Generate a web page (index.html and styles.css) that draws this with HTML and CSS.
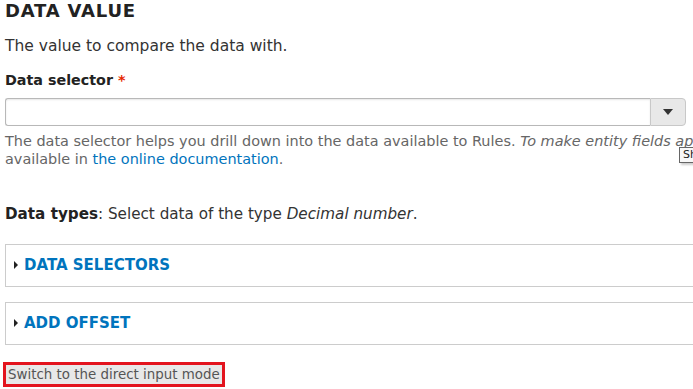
FILE: index.html
```html
<!DOCTYPE html>
<html lang="en">

<head>
    <meta charset="UTF-8" />
    <title>Data value</title>
    <link rel="stylesheet" href="styles.css">
</head>

<body>
    <div class="form-item">
        <h4 class="label-head">Data value</h4>
        <p class="intro">The value to compare the data with.</p>

        <label class="label" for="selector">Data selector <span class="req">*</span></label>
        <div class="combo">
            <input type="text" id="selector" class="combo-input" />
            <button class="combo-btn" type="button">
                <svg width="10" height="6" viewBox="0 0 10 6"><path d="M0 0h10L5 6z" fill="#333" /></svg>
            </button>
        </div>
        <div class="description">
            The data selector helps you drill down into the data available to Rules. <em>To make entity fields appear in the data selector, you may have to use the condition 'entity has field'.</em> More useful tips are<br>
            available in <a href="#">the online documentation</a>.
            <span class="tip">Show</span>
        </div>

        <p class="types"><strong>Data types</strong>: Select data of the type <em>Decimal number</em>.</p>

        <details class="fieldset">
            <summary>Data selectors</summary>
        </details>
        <details class="fieldset">
            <summary>Add offset</summary>
        </details>

        <div class="switch-wrap">
            <button class="switch" type="button">Switch to the direct input mode</button>
        </div>
    </div>
</body>

</html>
```

FILE: styles.css
```css
*,
::after,
::before {
    box-sizing: border-box;
    padding: 0;
    margin: 0;
}

body {
    width: 760px;
    padding: 0 5px;
    background: white;
    color: #333;
    font-family: "DejaVu Sans", "Open Sans", sans-serif;
    font-size: 14px;
    overflow: hidden;
}

.label-head {
    font-size: 18px;
    font-weight: bold;
    text-transform: uppercase;
    color: #222;
    line-height: 22px;
    letter-spacing: 0.8px;
}

.intro {
    margin-top: 14px;
    font-size: 15.5px;
    line-height: 20px;
}

.label {
    display: block;
    margin-top: 14px;
    font-size: 14.3px;
    font-weight: bold;
    color: #222;
    line-height: 20px;
}

.req {
    color: #e62600;
}

.combo {
    display: flex;
    width: 681px;
    margin-top: 8px;
    height: 28px;
}

.combo-input {
    flex: 1;
    border: 1px solid #b8b8b8;
    border-right: none;
    border-radius: 3px 0 0 3px;
    box-shadow: inset 0 1px 2px rgba(0, 0, 0, 0.1);
}

.combo-btn {
    width: 36px;
    border: 1px solid #c8c8c8;
    border-radius: 0 4px 4px 0;
    background: #e8e8e8;
    display: flex;
    align-items: center;
    justify-content: center;
}

.description {
    position: relative;
    margin-top: 6px;
    color: #666;
    font-size: 14.45px;
    line-height: 18px;
    height: 36px;
    white-space: nowrap;
}

.description a {
    color: #0074bd;
    text-decoration: none;
}

.tip {
    position: absolute;
    left: 674px;
    top: 15px;
    font-size: 11px;
    line-height: 14px;
    padding: 0 3px;
    background: #f8f8f8;
    border: 1px solid #666;
    color: #222;
    box-shadow: 2px 2px 2px rgba(0, 0, 0, 0.2);
}

.types {
    margin-top: 36px;
    font-size: 15.2px;
    line-height: 20px;
}

.types strong {
    color: #222;
}

.fieldset {
    border: 1px solid #ccc;
    margin-top: 20px;
    height: 43px;
}

.fieldset + .fieldset {
    margin-top: 15px;
}

.fieldset summary {
    padding: 10px 0 0 8px;
    font-weight: bold;
    font-size: 15px;
    color: #0074bd;
    text-transform: uppercase;
    line-height: 20px;
    list-style: none;
    display: flex;
    align-items: center;
    gap: 6px;
}

.fieldset summary::before {
    content: "";
    border-left: 4px solid #222;
    border-top: 4px solid transparent;
    border-bottom: 4px solid transparent;
}

.switch-wrap {
    display: inline-block;
    margin-top: 17px;
    margin-left: -2px;
    border: 3px solid #e3141e;
}

.switch {
    display: block;
    border: none;
    background: #e8e8e8;
    color: #555;
    font-family: "DejaVu Sans", Verdana, sans-serif;
    font-size: 13.4px;
    padding: 2px 2px;
    line-height: 15px;
}
```
